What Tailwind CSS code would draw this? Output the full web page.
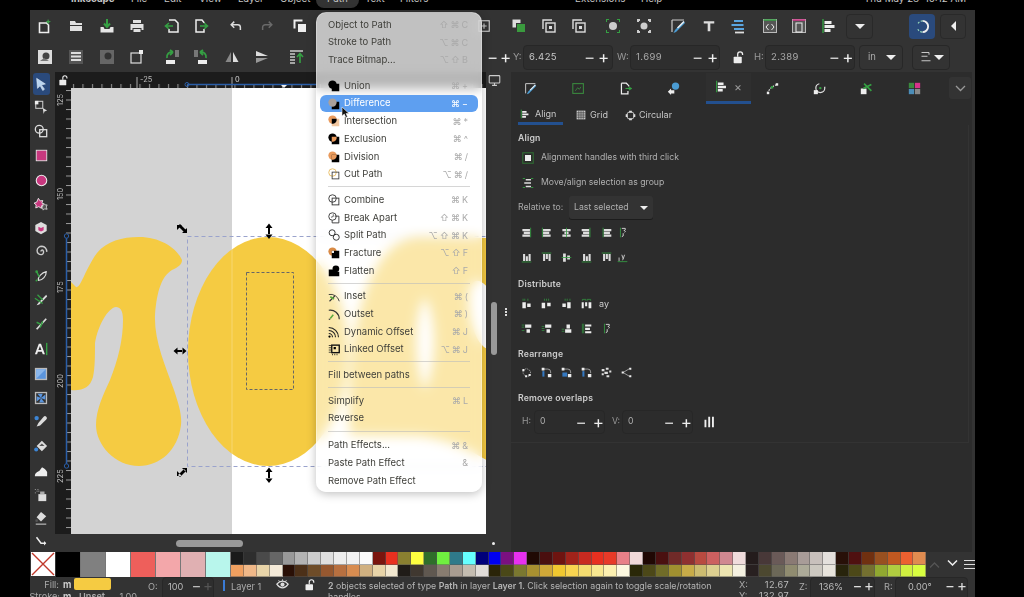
<!DOCTYPE html>
<html lang="en">
<head>
<meta charset="UTF-8">
<title>Inkscape</title>
<script src="https://cdn.jsdelivr.net/npm/@tailwindcss/browser@4"></script>
</head>
<body class="bg-black">
<!-- icon sheet -->
<svg class="hidden">
  <symbol id="newdoc" viewBox="0 0 16 16"><path d="M2.500 5h7l2 2v7.500h-9z" fill="none" stroke="#eee" stroke-width="1.600"/><path d="M11 1l1 2 2 .5-2 1-1 2-.6-2-1.900-1 1.900-.5z" fill="#3fa34d"/></symbol>
  <symbol id="open" viewBox="0 0 16 16"><path d="M2 3h5l1 2h6v2H2zM2 8h12v5H2z" fill="#e0e0e0"/></symbol>
  <symbol id="save" viewBox="0 0 16 16"><path d="M1.500 9h3l1 2h5l1-2h3v5.500h-13z" fill="#e6e6e6"/><path d="M8 1v7M5 5.500L8 9l3-3.500" fill="none" stroke="#35a043" stroke-width="2"/></symbol>
  <symbol id="print" viewBox="0 0 16 16"><path d="M4 2h8v3H4zM1.500 6h13v6h-2v-2h-9v2h-2zM4.500 11h7v3h-7z" fill="#e0e0e0"/></symbol>
  <symbol id="import" viewBox="0 0 16 16"><path d="M5 2h6l3 3v9H5v-3" fill="none" stroke="#eee" stroke-width="1.500"/><path d="M9 8H2M5 5L1.500 8 5 11" fill="none" stroke="#35a043" stroke-width="1.600"/></symbol>
  <symbol id="export" viewBox="0 0 16 16"><path d="M11 5V4.500L9 2H3v12h8v-3" fill="none" stroke="#eee" stroke-width="1.500"/><path d="M7 8h7M11 5l3.500 3-3.500 3" fill="none" stroke="#35a043" stroke-width="1.600"/></symbol>
  <symbol id="undo" viewBox="0 0 16 16"><path d="M6 3L2.500 6.500 6 10M3 6.500h7a3 3 0 0 1 3 3v3" fill="none" stroke="#ddd" stroke-width="1.700"/></symbol>
  <symbol id="redo" viewBox="0 0 16 16"><path d="M10 3l3.500 3.500L10 10M13 6.500H6a3 3 0 0 0-3 3v3" fill="none" stroke="#6a6a6a" stroke-width="1.700"/></symbol>
  <symbol id="dup" viewBox="0 0 16 16"><path d="M1.500 1.500h9v2h-7v7h-2z" fill="#eee"/><rect x="5.500" y="5.500" width="9" height="9" fill="#eee" stroke="#333"/></symbol>
  <symbol id="dupg" viewBox="0 0 16 16"><path d="M1.500 1.500h8v8h-8z" fill="#ddd"/><rect x="5.500" y="5.500" width="9" height="9" fill="#3a9a3e" stroke="#333"/></symbol>
  <symbol id="clone" viewBox="0 0 16 16"><path d="M2 11V2h9" fill="none" stroke="#ddd" stroke-width="1.400"/><rect x="5" y="5" width="9" height="9" fill="none" stroke="#ddd" stroke-width="1.400"/><rect x="8" y="8" width="3" height="3" fill="#ddd"/></symbol>
  <symbol id="group" viewBox="0 0 16 16"><circle cx="8" cy="8" r="4" fill="#ccc"/><path d="M1 1h3v1H2v2H1zM15 1v3h-1V2h-2V1zM1 15v-3h1v2h2v1zM15 15h-3v-1h2v-2h1z" fill="#35a043"/></symbol>
  <symbol id="ungroup" viewBox="0 0 16 16"><circle cx="8" cy="8" r="3.500" fill="#ccc"/><path d="M1 1h3v2H3v1H1zM15 1v3h-2V3h-1V1zM1 15v-3h2v1h1v2zM15 15h-3v-2h1v-1h2z" fill="#ccc"/></symbol>
  <symbol id="pen" viewBox="0 0 16 16"><path d="M2 2h12M2 2v12" stroke="#ccc" stroke-width="1.200" fill="none"/><path d="M13.500 3L5 12l-1.500 3 2.500-1 9-9z" fill="#4b9cd3"/><path d="M13.500 3L7 9.500l1 1 6.500-6.500z" fill="#eee"/></symbol>
  <symbol id="textT" viewBox="0 0 16 16"><path d="M2 2.500h12v2.500H9.500v9h-3V5H2z" fill="#ddd"/></symbol>
  <symbol id="lines" viewBox="0 0 16 16"><path d="M4 3h9M1.500 7h12M4 11h10" stroke="#5aa5e0" stroke-width="1.800"/><path d="M5 14.500h9" stroke="#ddd" stroke-width="1.800"/></symbol>
  <symbol id="xml" viewBox="0 0 16 16"><rect x="1.500" y="1.500" width="13" height="13" fill="#555" stroke="#bbb"/><path d="M1.500 2h13" stroke="#35a043" stroke-width="1.500"/><path d="M6.500 6L4 9l2.500 3M9.500 6L12 9l-2.500 3" fill="none" stroke="#eee"/></symbol>
  <symbol id="obj" viewBox="0 0 16 16"><rect x="1.500" y="1.500" width="13" height="13" fill="#555" stroke="#bbb"/><path d="M1.500 2h13" stroke="#d6338a" stroke-width="1.500"/><rect x="5" y="5" width="6" height="9" fill="none" stroke="#eee"/></symbol>
  <symbol id="alignL" viewBox="0 0 16 16"><path d="M2 1v14" stroke="#35a043" stroke-width="1.400"/><path d="M3.500 3h7v3h-7zM3.500 7h10v3h-10zM3.500 11h6v3h-6z" fill="#eee"/></symbol>
  <symbol id="plusbox" viewBox="0 0 16 16"><rect x="2" y="2" width="12" height="12" fill="none" stroke="#ccc" stroke-width="1.300"/><path d="M8 5v6M5 8h6" stroke="#ccc" stroke-width="1.300"/></symbol>
  <symbol id="selall" viewBox="0 0 16 16"><rect x="1" y="1" width="14" height="14" fill="#ddd"/><circle cx="9" cy="7" r="3.500" fill="#444"/><path d="M3 12l4-3 5 3z" fill="#777"/></symbol>
  <symbol id="layers" viewBox="0 0 16 16"><rect x="1" y="1" width="14" height="14" fill="#555"/><path d="M3 3h10v2H3zM3 6.500h10v2H3zM3 10h10v2H3z" fill="#ddd"/></symbol>
  <symbol id="selb" viewBox="0 0 16 16"><rect x="1" y="1" width="14" height="14" fill="#666"/><circle cx="9" cy="7" r="3.500" fill="#333"/></symbol>
  <symbol id="touch" viewBox="0 0 16 16"><rect x="2" y="4" width="10" height="10" fill="none" stroke="#ddd" stroke-width="1.200"/><rect x="10" y="1" width="4" height="4" fill="#eee"/></symbol>
  <symbol id="rotl" viewBox="0 0 16 16"><path d="M2 15v-4h9v4z" fill="#eee"/><path d="M3 9a5 5 0 0 1 6-6M9 3L6 1M9 3L6 6" fill="none" stroke="#35a043" stroke-width="1.800"/><rect x="11" y="1" width="4" height="7" fill="#777"/></symbol>
  <symbol id="rotr" viewBox="0 0 16 16"><path d="M5 15v-4h9v4z" fill="#eee"/><path d="M13 9a5 5 0 0 0-6-6M7 3l3-2M7 3l3 3" fill="none" stroke="#35a043" stroke-width="1.800"/><rect x="1" y="1" width="4" height="7" fill="#777"/></symbol>
  <symbol id="fliph" viewBox="0 0 16 16"><path d="M7 3L1.500 13H7z" fill="#888"/><path d="M9 3l5.500 10H9z" fill="#ddd"/></symbol>
  <symbol id="flipv" viewBox="0 0 16 16"><path d="M2 2l12 5H2z" fill="#ddd"/><path d="M2 9h12L2 14z" fill="#999"/></symbol>
  <symbol id="raise" viewBox="0 0 16 16"><path d="M1 2h13M1 5h5M1 8h5M1 11h5M1 14h5" stroke="#ccc" stroke-width="1.300"/><path d="M11 14V5M8 8l3-3.500L14 8" fill="none" stroke="#35a043" stroke-width="1.600"/></symbol>
  <symbol id="lock" viewBox="0 0 16 16"><rect x="2" y="7" width="10" height="8" rx="1" fill="#eee"/><path d="M7 7V4a3 3 0 0 1 6 0v1" fill="none" stroke="#eee" stroke-width="1.600"/></symbol>
  <symbol id="screen" viewBox="0 0 16 16"><rect x="1.500" y="2" width="13" height="9" rx="1" fill="none" stroke="#ccc" stroke-width="1.300"/><path d="M5 14h6M8 11v3" stroke="#ccc" stroke-width="1.300"/></symbol>

  <symbol id="arrow" viewBox="0 0 16 16"><path d="M3 1.500l10 6.500-4.500 1L12 14l-2 1.500-3-5.500-3 3z" fill="#b9d4f0" stroke="#e8f0f8" stroke-width=".6"/></symbol>
  <symbol id="node" viewBox="0 0 16 16"><rect x="2" y="1.500" width="8" height="8" fill="none" stroke="#ccc" stroke-width="1.200"/><rect x="1" y="1" width="4" height="4" fill="#eee"/><path d="M10 9l5 3-3 1-1 3z" fill="#ddd"/></symbol>
  <symbol id="shapes" viewBox="0 0 16 16"><circle cx="6" cy="6" r="4.500" fill="none" stroke="#ddd" stroke-width="1.500"/><rect x="6.500" y="6.500" width="8" height="8" fill="none" stroke="#ddd" stroke-width="1.500"/></symbol>
  <symbol id="rect" viewBox="0 0 16 16"><rect x="1.500" y="1.500" width="13" height="13" fill="#c8387f" stroke="#eee"/></symbol>
  <symbol id="circ" viewBox="0 0 16 16"><circle cx="8" cy="8" r="6.500" fill="#c8387f" stroke="#eee" stroke-width="1.300"/></symbol>
  <symbol id="stars" viewBox="0 0 16 16"><path d="M5 1.500l2 3 3-.5-1 3 2.500 2-3 1v3L5.500 11 2 12.500l.5-3.500L0 7l3-1z" fill="#c8387f" stroke="#eee"/><path d="M11 7l1.500 2 2.500 0-1 2.500 1 2.500-3-.5-1.500 1.500-1-3z" fill="#555" stroke="#eee" stroke-width=".8"/></symbol>
  <symbol id="cube" viewBox="0 0 16 16"><path d="M8 1l6.500 3.500v7L8 15l-6.500-3.500v-7z" fill="#ddd"/><path d="M8 8l3-1.500v4L8 12l-3-1.500v-4z" fill="#c8387f"/></symbol>
  <symbol id="spiral" viewBox="0 0 16 16"><path d="M8 8.500a1.500 1.500 0 0 1 2-1.500 3 3 0 0 1-1 5 4.500 4.500 0 0 1-5.500-4.500A5.500 5.500 0 0 1 9 2.500 6 6 0 0 1 14.500 9" fill="none" stroke="#ccc" stroke-width="1.600"/></symbol>
  <symbol id="pencil" viewBox="0 0 16 16"><path d="M5 13c-1-4 4-9 9-10 0 5-4 10-9 10z" fill="none" stroke="#ddd" stroke-width="1.300"/><path d="M3 3l3 6M2 14l2-2" stroke="#35a043" stroke-width="1.600"/><circle cx="3" cy="3" r="1.500" fill="#35a043"/></symbol>
  <symbol id="pen2" viewBox="0 0 16 16"><path d="M14 2L5 11l-2 3 3-1 9-9z" fill="#ddd"/><path d="M1 6l9 6M4 2l6 6" stroke="#35a043" stroke-width="1.500"/></symbol>
  <symbol id="callig" viewBox="0 0 16 16"><path d="M14 2L3 14" stroke="#ddd" stroke-width="2"/><path d="M3 6l4 2M7 12l3-7" stroke="#35a043" stroke-width="1.600"/></symbol>
  <symbol id="textA" viewBox="0 0 16 16"><path d="M1 14L5.500 2h2.500L12.500 14H10l-1-3H4.500l-1 3zM5 9h3.500L6.800 4.500z" fill="#eee"/><path d="M14.500 1v14" stroke="#35a043" stroke-width="1.600"/></symbol>
  <symbol id="grad" viewBox="0 0 16 16"><rect x="1" y="1" width="14" height="14" fill="#bbb"/><rect x="2.500" y="2.500" width="11" height="11" fill="#5b95dd"/><path d="M2.500 2.500h11L2.500 13.500z" fill="#8ab6ea"/></symbol>
  <symbol id="mesh" viewBox="0 0 16 16"><rect x="1" y="1" width="14" height="14" fill="#bbb"/><rect x="2.500" y="2.500" width="11" height="11" fill="#333"/><path d="M8 8L4 3h6zM8 8l5-4v6zM8 8l4 5H6zM8 8l-5 4V6z" fill="#5b95dd"/></symbol>
  <symbol id="dropper" viewBox="0 0 16 16"><path d="M14 2c-1-1-2-1-3 0L5 9l-2 4 4-1 7-7c1-1 1-2 0-3z" fill="#ddd"/><circle cx="3" cy="3.500" r="2.500" fill="#3d86d6"/></symbol>
  <symbol id="bucket" viewBox="0 0 16 16"><path d="M9 2l6 6-6 6-6-6z" fill="#ddd"/><circle cx="2.500" cy="12" r="2.300" fill="#3d86d6"/><path d="M9 5l3 3H6z" fill="#555"/></symbol>
  <symbol id="eraser" viewBox="0 0 16 16"><path d="M1 14c0-4 3-5 5-6l3-4c2 0 5 3 6 5v5z" fill="#eee"/></symbol>
  <symbol id="spray" viewBox="0 0 16 16"><rect x="5" y="7" width="9" height="8" fill="#ddd"/><rect x="7" y="4" width="5" height="3" fill="#aaa"/><path d="M1 1h1v1H1zM3 3h1v1H3zM1 5h1v1H1zM4 1h1v1H4zM5 3h1v1H5z" fill="#ccc"/></symbol>
  <symbol id="erase2" viewBox="0 0 16 16"><path d="M8 1l6 5-6 6-5-5z" fill="#ddd"/><path d="M2 15h12" stroke="#ccc" stroke-width="1.200"/><circle cx="3" cy="11" r="1.500" fill="#555"/></symbol>
  <symbol id="conn" viewBox="0 0 16 16"><path d="M2 3l6 8h6" fill="none" stroke="#eee" stroke-width="2"/><path d="M12 8l3 3-3 3z" fill="#eee"/></symbol>
  <symbol id="tab1" viewBox="0 0 16 16"><rect x="1" y="2" width="13" height="12" fill="none" stroke="#3a8a3e" stroke-width="1.300"/><path d="M4 11l3-4 2 2 2-3" fill="none" stroke="#3a8a3e"/></symbol>
  <symbol id="tab2" viewBox="0 0 16 16"><path d="M3 1.500h6l3 3v1M3 1.500v13h8V11" fill="none" stroke="#eee" stroke-width="1.500"/><path d="M8 8h6M12 6l3 2-3 2" fill="none" stroke="#35a043" stroke-width="1.400"/></symbol>
  <symbol id="tab3" viewBox="0 0 16 16"><circle cx="10.500" cy="5" r="4.500" fill="#4b9cd3"/><path d="M1 12l4-4v2h4v4H5v2z" fill="#eee"/></symbol>
  <symbol id="tab4" viewBox="0 0 16 16"><path d="M2 14C4 8 8 5 14 3" fill="none" stroke="#ddd" stroke-dasharray="2 1.500" stroke-width="1.500"/><rect x="1" y="12" width="3" height="3" fill="#eee"/><rect x="6" y="5" width="3" height="3" fill="#35a043"/><rect x="12" y="1.500" width="3" height="3" fill="#eee"/></symbol>
  <symbol id="tab5" viewBox="0 0 16 16"><circle cx="9" cy="7.500" r="5.500" fill="none" stroke="#ddd" stroke-width="1.500" stroke-dasharray="24 8"/><circle cx="9" cy="7.500" r="1.500" fill="#35a043"/><rect x="1" y="10" width="5" height="5" fill="#eee"/></symbol>
  <symbol id="tab6" viewBox="0 0 16 16"><rect x="1" y="8" width="7" height="7" fill="#eee"/><path d="M5 2l9 9M4 8l10-5" stroke="#35a043" stroke-width="2"/></symbol>
  <symbol id="tab7" viewBox="0 0 16 16"><rect x="1" y="1" width="6.500" height="6.500" fill="#3a8a3e"/><rect x="8.500" y="1" width="6.500" height="6.500" fill="#d6338a"/><rect x="1" y="8.500" width="6.500" height="6.500" fill="#4b8db8"/><rect x="8.500" y="8.500" width="6.500" height="6.500" fill="#888"/></symbol>
  <symbol id="grid" viewBox="0 0 16 16"><path d="M1 1h14v14H1z" fill="#ccc"/><path d="M4.500 1v14M8 1v14M11.500 1v14M1 4.500h14M1 8h14M1 11.500h14" stroke="#2b2b2b"/></symbol>
  <symbol id="circular" viewBox="0 0 16 16"><circle cx="8" cy="8" r="5.500" fill="none" stroke="#ccc" stroke-width="1.300"/><path d="M6 1h4v3H6zM6 12h4v3H6zM1 6h3v4H1zM12 6h3v4h-3z" fill="#ddd"/></symbol>

  <symbol id="handle" viewBox="0 0 16 16"><rect x="1" y="1" width="14" height="14" fill="none" stroke="#2f6a33" stroke-width="1.500"/><rect x="4" y="4" width="8" height="8" fill="#eee"/></symbol>
  <symbol id="movegrp" viewBox="0 0 16 16"><path d="M1 2h3M12 2h3M1 14h3M12 14h3" stroke="#35a043" stroke-width="1.200"/><path d="M5 2.500h7v2H5zM3 7h9v2H3zM5 11.500h7v2H5z" fill="#ddd"/></symbol>
  <symbol id="a1" viewBox="0 0 16 16"><path d="M2 3h11v3H2zM4 7h9v3H4zM2 11h11v3H2z" fill="#ddd"/><path d="M14 1v14" stroke="#35a043" stroke-width="1.200"/></symbol>
  <symbol id="a2" viewBox="0 0 16 16"><path d="M3 3h11v3H3zM3 7h9v3H3zM3 11h11v3H3z" fill="#ddd"/><path d="M2 1v14" stroke="#35a043" stroke-width="1.200"/></symbol>
  <symbol id="a3" viewBox="0 0 16 16"><path d="M2 3h12v3H2zM5 7h6v3H5zM2 11h12v3H2z" fill="#ddd"/><path d="M8 1v14" stroke="#35a043" stroke-width="1.200"/></symbol>
  <symbol id="a4" viewBox="0 0 16 16"><path d="M1 3h11v3H1zM3 7h9v3H3zM1 11h11v3H1z" fill="#ddd"/><path d="M13 1v14" stroke="#35a043" stroke-width="1.200"/></symbol>
  <symbol id="a5" viewBox="0 0 16 16"><path d="M4 3h11v3H4zM4 7h9v3H4zM4 11h11v3H4z" fill="#ddd"/><path d="M3 1v14" stroke="#35a043" stroke-width="1.200"/></symbol>
  <symbol id="atxt" viewBox="0 0 16 16"><path d="M5 1v14" stroke="#35a043" stroke-width="1.200"/><path d="M7 2h5c1 2-1 3-2 3 2 0 3 2 1 3M9 9v4l-2 1" fill="none" stroke="#ddd" stroke-width="1.300"/></symbol>
  <symbol id="b1" viewBox="0 0 16 16"><path d="M3 3h3v10H3zM7 6h3v7H7zM11 3h3v10h-3z" fill="#ddd"/><path d="M1 14.500h14" stroke="#35a043" stroke-width="1.200"/></symbol>
  <symbol id="b2" viewBox="0 0 16 16"><path d="M3 3h3v10H3zM7 3h3v7H7zM11 3h3v10h-3z" fill="#ddd"/><path d="M1 1.500h14" stroke="#35a043" stroke-width="1.200"/></symbol>
  <symbol id="b3" viewBox="0 0 16 16"><path d="M3 2h4v12H3zM9 5h4v6H9z" fill="#ddd"/><path d="M1 8h14" stroke="#35a043" stroke-width="1.200"/></symbol>
  <symbol id="btxt" viewBox="0 0 16 16"><path d="M1 14h14" stroke="#35a043" stroke-width="1.200"/><path d="M3 8v5M7 4l2 6 2-6M9 10l-1 2" fill="none" stroke="#ddd" stroke-width="1.200"/></symbol>
  <symbol id="d1" viewBox="0 0 16 16"><path d="M3 1v3M5.500 1v3M10 1v3" stroke="#35a043"/><path d="M2 6h5v9H2zM9 8h5v5H9z" fill="#eee"/></symbol>
  <symbol id="d2" viewBox="0 0 16 16"><path d="M5 1v3M8 1v3M11 1v3" stroke="#35a043"/><path d="M1 7h5v8H1zM9 7h5v5H9z" fill="#eee"/></symbol>
  <symbol id="d3" viewBox="0 0 16 16"><path d="M6 1v3M9 1v3M13 1v3" stroke="#35a043"/><path d="M2 8h5v5H2zM9 6h5v9H9z" fill="#eee"/></symbol>
  <symbol id="d4" viewBox="0 0 16 16"><path d="M2 2h5M9 2h5M2 2v2M7 2v2M9 2v2M14 2v2" stroke="#35a043"/><path d="M1 6h3v9H1zM6 6h3v6H6zM11 6h4v9h-4z" fill="#eee"/></symbol>
  <symbol id="e1" viewBox="0 0 16 16"><path d="M1 3h4M1 6h4M1 11h4" stroke="#35a043"/><path d="M6 2h9v5H6zM8 9h5v5H8z" fill="#eee"/></symbol>
  <symbol id="e2" viewBox="0 0 16 16"><path d="M1 5h4M1 8h4M1 11h4" stroke="#35a043"/><path d="M6 2h9v5H6zM8 9h5v5H8z" fill="#eee"/></symbol>
  <symbol id="e3" viewBox="0 0 16 16"><path d="M1 9h4M1 12h4" stroke="#35a043"/><path d="M8 2h5v6H8zM6 9h9v5H6z" fill="#eee"/></symbol>
  <symbol id="e4" viewBox="0 0 16 16"><path d="M2 1v14M4 1v14" stroke="#35a043"/><path d="M6 2h9v3H6zM6 7h7v3H6zM6 12h9v3H6z" fill="#eee"/></symbol>
  <symbol id="r1" viewBox="0 0 16 16"><path d="M3 5L8 2l6 4-1 7-6 1-4-5z" fill="none" stroke="#ccc" stroke-dasharray="2 1.500"/><path d="M2 3h3v3H2zM11 10h3v3h-3zM6 12h3v3H6z" fill="#eee"/></symbol>
  <symbol id="r2" viewBox="0 0 16 16"><path d="M4 3h6a4 4 0 0 1 4 4v2" fill="none" stroke="#ccc"/><path d="M1 1h4v4H1zM10 10h5v5h-5z" fill="#eee"/><path d="M2 6h3v8H2z" fill="#3478c0"/></symbol>
  <symbol id="r3" viewBox="0 0 16 16"><path d="M4 3h6a4 4 0 0 1 4 4v2" fill="none" stroke="#ccc"/><path d="M1 1h4v4H1zM10 10h5v5h-5z" fill="#eee"/><path d="M2 8h7v6H2z" fill="#3478c0"/></symbol>
  <symbol id="r5" viewBox="0 0 16 16"><path d="M1 3h4v3H1zM7 1h4v3H7zM12 5h3v3h-3zM5 7h5v3H5zM1 9h3v3H1zM8 12h4v3H8z" fill="#ddd"/></symbol>
  <symbol id="r6" viewBox="0 0 16 16"><path d="M3 8l10-6M3 8l10 6" stroke="#ccc"/><path d="M1 6.500h3v3H1zM12 1h3v3h-3zM12 12h3v3h-3z" fill="#eee"/></symbol>
  <symbol id="bars" viewBox="0 0 16 16"><path d="M2 5h2.500v10H2zM7 1h2.500v14H7zM12 1h2.500v14H12z" fill="#eee"/></symbol>

  <symbol id="m-union" viewBox="0 0 16 16"><circle cx="6" cy="6" r="5.500"/><rect x="5" y="5" width="10" height="10"/></symbol>
  <symbol id="m-diff" viewBox="0 0 16 16"><rect x="5" y="5" width="10" height="10"/><circle cx="6" cy="6" r="5.500" fill="#aaa09a"/></symbol>
  <symbol id="m-inter" viewBox="0 0 16 16"><circle cx="6" cy="6" r="5.500" fill="#e99a5c"/><rect x="5" y="5" width="10" height="10" fill="#f2c7a0"/><path d="M5 5h6.500A5.500 5.500 0 0 1 5 11.500z"/></symbol>
  <symbol id="m-excl" viewBox="0 0 16 16"><circle cx="6" cy="6" r="5.500"/><rect x="5" y="5" width="10" height="10"/><path d="M5 5h6.500A5.500 5.500 0 0 1 5 11.500z" fill="#e99a5c"/></symbol>
  <symbol id="m-div" viewBox="0 0 16 16"><circle cx="6" cy="6" r="5.500" fill="#e99a5c"/><rect x="5" y="5" width="10" height="10"/><path d="M5 5h6.500A5.500 5.500 0 0 1 5 11.500z" fill="#e99a5c"/></symbol>
  <symbol id="m-cut" viewBox="0 0 16 16"><circle cx="6" cy="6" r="5" fill="none" stroke="#e9c06c" stroke-width="1.300"/><rect x="5.500" y="5.500" width="9" height="9" fill="none" stroke="#333" stroke-width="1.100"/></symbol>
  <symbol id="m-comb" viewBox="0 0 16 16"><circle cx="6" cy="6" r="5" fill="none" stroke="#333" stroke-width="1.200"/><rect x="5.500" y="5.500" width="9" height="9" fill="none" stroke="#333" stroke-width="1.200"/></symbol>
  <symbol id="m-break" viewBox="0 0 16 16"><circle cx="6" cy="6" r="5" fill="none" stroke="#333" stroke-width="1.200"/><path d="M4 7l3-1v-3" fill="none" stroke="#333"/><path d="M9 5.500h5.500v9h-9V11" fill="none" stroke="#333" stroke-width="1.200"/></symbol>
  <symbol id="m-split" viewBox="0 0 16 16"><circle cx="5.500" cy="5" r="4" fill="none" stroke="#333" stroke-width="1.300"/><circle cx="11" cy="11" r="4" fill="none" stroke="#333" stroke-width="1.300"/></symbol>
  <symbol id="m-frac" viewBox="0 0 16 16"><circle cx="6" cy="6" r="5.500" fill="#d98a44"/><rect x="5" y="5" width="10" height="10"/><path d="M5 5h3v3H5z" fill="#eee"/></symbol>
  <symbol id="m-flat" viewBox="0 0 16 16"><circle cx="10.500" cy="5" r="4.500"/><path d="M1 6h8v3h6v6H1z"/></symbol>
  <symbol id="m-inset" viewBox="0 0 16 16"><path d="M1 6a12 12 0 0 1 14 9" fill="none" stroke="#333" stroke-width="1.200"/><path d="M2 15l7-7" stroke="#333" stroke-width="1.500"/><path d="M3 9l5 3" stroke="#5aa83c" stroke-width="2"/></symbol>
  <symbol id="m-outset" viewBox="0 0 16 16"><path d="M1 3a12 12 0 0 1 14 12" fill="none" stroke="#333" stroke-width="1.500"/><path d="M3 14l4-5" stroke="#5aa83c" stroke-width="2"/><path d="M1 15h2" stroke="#333" stroke-width="1.500"/></symbol>
  <symbol id="m-dyn" viewBox="0 0 16 16"><path d="M1 2a13 13 0 0 1 13 13M1 6a9 9 0 0 1 9 9M1 10a5 5 0 0 1 5 5" fill="none" stroke="#222" stroke-width="1.500"/><circle cx="2" cy="14" r="1.500"/></symbol>
  <symbol id="m-link" viewBox="0 0 16 16"><rect x="5" y="1.500" width="10" height="10" fill="none" stroke="#111" stroke-width="1.800"/><rect x="7.500" y="4" width="3" height="3"/><path d="M1 2h3M1 5h3M1 8h3M1 11h3M6 13v2M9 13v2M12 13v2" stroke="#111"/></symbol>
</svg>

<div class="relative w-[1024px] h-[597px] overflow-hidden bg-black font-['Inter','DejaVu_Sans',sans-serif]">
  <!-- mac menu bar, cut off at the top -->
  <div class="absolute left-[316px] top-0 w-[43px] h-[8px] rounded-b-[8px] bg-[#333]"></div>
  <div class="relative h-[10px] overflow-hidden text-[#c4c4c4] text-[9.800px] leading-[10px]">
    <div class="flex -mt-[7px] items-center h-[12px]">
      <span class="ml-[71px] w-[60px] font-bold">Inkscape</span>
      <span class="w-[33px]">File</span>
      <span class="w-[35px]">Edit</span>
      <span class="w-[39px]">View</span>
      <span class="w-[42px]">Layer</span>
      <span class="w-[47px]">Object</span>
      <span class="w-[38px]">Path</span>
      <span class="w-[35px]">Text</span>
      <span class="w-[175px]">Filters</span>
      <span class="w-[66px]">Extensions</span>
      <span class="w-[223px]">Help</span>
      <span>Thu May 28&nbsp; 10:12 AM</span>
    </div>
  </div>

  <div class="ml-[30px] w-[945px] h-[587px] bg-[#333] flex flex-col text-[#c8c8c8] blur-[0.35px]">
    <!-- toolbar 1 -->
    <div class="h-[32px] flex items-center shrink-0">
      <svg class="w-[16px] h-[16px] ml-[7px]"><use href="#newdoc"/></svg>
      <svg class="w-[16px] h-[16px] ml-[15px]"><use href="#open"/></svg>
      <svg class="w-[16px] h-[16px] ml-[15px]"><use href="#save"/></svg>
      <svg class="w-[16px] h-[16px] ml-[14px]"><use href="#print"/></svg>
      <svg class="w-[16px] h-[16px] ml-[19px]"><use href="#import"/></svg>
      <svg class="w-[16px] h-[16px] ml-[13px]"><use href="#export"/></svg>
      <svg class="w-[14px] h-[14px] ml-[20px]"><use href="#undo"/></svg>
      <svg class="w-[14px] h-[14px] ml-[17px]"><use href="#redo"/></svg>
      <svg class="w-[16px] h-[16px] ml-[18px]"><use href="#dup"/></svg>
      <svg class="w-[14px] h-[14px] ml-[169px]"><use href="#plusbox"/></svg>
      <svg class="w-[16px] h-[16px] ml-[20px]"><use href="#dupg"/></svg>
      <svg class="w-[16px] h-[16px] ml-[14px]"><use href="#clone"/></svg>
      <svg class="w-[16px] h-[16px] ml-[14px]"><use href="#clone"/></svg>
      <svg class="w-[16px] h-[16px] ml-[18px]"><use href="#group"/></svg>
      <svg class="w-[16px] h-[16px] ml-[15px]"><use href="#ungroup"/></svg>
      <svg class="w-[16px] h-[16px] ml-[18px]"><use href="#pen"/></svg>
      <svg class="w-[14px] h-[14px] ml-[16px]"><use href="#textT"/></svg>
      <svg class="w-[16px] h-[16px] ml-[14px]"><use href="#lines"/></svg>
      <svg class="w-[16px] h-[16px] ml-[16px]"><use href="#xml"/></svg>
      <svg class="w-[16px] h-[16px] ml-[13px]"><use href="#obj"/></svg>
      <svg class="w-[16px] h-[16px] ml-[14px]"><use href="#alignL"/></svg>
      <div class="w-[27px] h-[25px] ml-[9px] rounded-[4px] border border-[#292929] flex items-center justify-center"><div class="w-0 h-0 border-x-[5px] border-x-transparent border-t-[5px] border-t-[#eee]"></div></div>
      <div class="w-[26px] h-[25px] ml-[36px] rounded-[4px] bg-[#2a4a7c] flex items-center justify-center">
        <svg class="w-[15px] h-[15px]" viewBox="0 0 16 16"><path d="M8 2a6 6 0 0 1 0 12" fill="none" stroke="#eee" stroke-width="2"/><path d="M8 2a6 6 0 0 0-5 3M3 11a6 6 0 0 0 5 3" fill="none" stroke="#9db" stroke-width="1.300" stroke-dasharray="2 1.500"/></svg>
      </div>
      <div class="w-[26px] h-[25px] ml-[5px] rounded-[4px] border border-[#292929] flex items-center justify-center"><div class="w-0 h-0 border-y-[5px] border-y-transparent border-r-[5px] border-r-[#eee]"></div></div>
    </div>
    <!-- toolbar 2 -->
    <div class="h-[30px] flex items-center shrink-0 text-[9.500px]">
      <svg class="w-[16px] h-[16px] ml-[7px]"><use href="#selall"/></svg>
      <svg class="w-[16px] h-[16px] ml-[15px]"><use href="#layers"/></svg>
      <svg class="w-[16px] h-[16px] ml-[15px]"><use href="#selb"/></svg>
      <svg class="w-[16px] h-[16px] ml-[14px]"><use href="#touch"/></svg>
      <svg class="w-[16px] h-[16px] ml-[19px]"><use href="#rotl"/></svg>
      <svg class="w-[16px] h-[16px] ml-[13px]"><use href="#rotr"/></svg>
      <svg class="w-[16px] h-[16px] ml-[15px]"><use href="#fliph"/></svg>
      <svg class="w-[16px] h-[16px] ml-[14px]"><use href="#flipv"/></svg>
      <svg class="w-[16px] h-[16px] ml-[19px]"><use href="#raise"/></svg>
      <span class="ml-[182px] w-[13px] text-[17px] text-[#ddd] leading-none">−</span>
      <span class="w-[14px] text-[17px] text-[#eee] leading-none">+</span>
      <span class="w-[7px] -ml-[1px] text-[#999]">Y:</span>
      <div class="ml-[3px] w-[90px] h-[25px] rounded-[4px] bg-[#2e2e2e] border border-[#272727] flex items-center pl-[5px] tracking-[.4px]">
        <span class="w-[55px]">6.425</span><span class="w-[14px] text-[17px] leading-none text-[#ccc]">−</span><span class="text-[17px] leading-none text-[#eee]">+</span>
      </div>
      <span class="w-[13px] ml-[4px] text-[#999]">W:</span>
      <div class="w-[90px] h-[25px] rounded-[4px] bg-[#2e2e2e] border border-[#272727] flex items-center pl-[5px] tracking-[.4px] text-[#aaa]">
        <span class="w-[56px]">1.699</span><span class="w-[15px] text-[17px] leading-none text-[#ccc]">−</span><span class="text-[17px] leading-none text-[#eee]">+</span>
      </div>
      <svg class="w-[13px] h-[13px] ml-[12px]"><use href="#lock"/></svg>
      <span class="w-[10px] ml-[9px] text-[#999]">H:</span>
      <div class="ml-[1px] w-[90px] h-[25px] rounded-[4px] bg-[#2e2e2e] border border-[#272727] flex items-center pl-[5px] tracking-[.4px] text-[#aaa]">
        <span class="w-[59px]">2.389</span><span class="w-[14px] text-[17px] leading-none text-[#ccc]">−</span><span class="text-[17px] leading-none text-[#eee]">+</span>
      </div>
      <div class="ml-[4px] w-[44px] h-[25px] rounded-[4px] bg-[#333] border border-[#272727] flex items-center pl-[8px] text-[#aaa]">
        <span class="w-[18px]">in</span><div class="w-0 h-0 border-x-[5px] border-x-transparent border-t-[5px] border-t-[#eee]"></div>
      </div>
      <div class="ml-[9px] w-[38px] h-[25px] rounded-[4px] bg-[#333] border border-[#272727] flex items-center pl-[7px]">
        <svg class="w-[12px] h-[12px]" viewBox="0 0 16 16"><path d="M2 2h10v3M2 7h8M2 13h12" stroke="#ccc" stroke-width="1.300" fill="none"/></svg>
        <div class="ml-[2px] w-0 h-0 border-x-[5px] border-x-transparent border-t-[5px] border-t-[#eee]"></div>
      </div>
    </div>
    <!-- main area -->
    <div class="h-[480px] flex shrink-0">
      <!-- tool column -->
      <div class="w-[25px] shrink-0 flex flex-col items-center pt-[1px] relative">
        <div class="w-[17px] h-[22px] rounded-[3px] bg-[#2a4a7c] flex items-center justify-center shrink-0 -ml-[3px]"><svg class="w-[14px] h-[14px]"><use href="#arrow"/></svg></div>
        <div class="flex flex-col items-center -ml-[3px]">
          <div class="h-[24px] flex items-center"><svg class="w-[14px] h-[14px]"><use href="#node"/></svg></div>
          <div class="h-[24px] flex items-center"><svg class="w-[14px] h-[14px]"><use href="#shapes"/></svg></div>
          <div class="h-[25px] flex items-center"><svg class="w-[13px] h-[13px]"><use href="#rect"/></svg></div>
          <div class="h-[24px] flex items-center"><svg class="w-[13px] h-[13px]"><use href="#circ"/></svg></div>
          <div class="h-[24px] flex items-center"><svg class="w-[14px] h-[14px]"><use href="#stars"/></svg></div>
          <div class="h-[23px] flex items-center"><svg class="w-[14px] h-[14px]"><use href="#cube"/></svg></div>
          <div class="h-[24px] flex items-center"><svg class="w-[14px] h-[14px]"><use href="#spiral"/></svg></div>
          <div class="h-[25px] flex items-center"><svg class="w-[14px] h-[14px]"><use href="#pencil"/></svg></div>
          <div class="h-[24px] flex items-center"><svg class="w-[14px] h-[14px]"><use href="#pen2"/></svg></div>
          <div class="h-[24px] flex items-center"><svg class="w-[14px] h-[14px]"><use href="#callig"/></svg></div>
          <div class="h-[25px] flex items-center"><svg class="w-[14px] h-[14px]"><use href="#textA"/></svg></div>
          <div class="h-[25px] flex items-center"><svg class="w-[14px] h-[14px]"><use href="#grad"/></svg></div>
          <div class="h-[24px] flex items-center"><svg class="w-[14px] h-[14px]"><use href="#mesh"/></svg></div>
          <div class="h-[24px] flex items-center"><svg class="w-[14px] h-[14px]"><use href="#dropper"/></svg></div>
          <div class="h-[24px] flex items-center"><svg class="w-[14px] h-[14px]"><use href="#bucket"/></svg></div>
          <div class="h-[25px] flex items-center"><svg class="w-[14px] h-[14px]"><use href="#eraser"/></svg></div>
          <div class="h-[23px] flex items-center"><svg class="w-[14px] h-[14px]"><use href="#spray"/></svg></div>
          <div class="h-[24px] flex items-center"><svg class="w-[14px] h-[14px]"><use href="#erase2"/></svg></div>
          <div class="h-[22px] flex items-center"><svg class="w-[12px] h-[12px]"><use href="#conn"/></svg></div>
        </div>
      </div>

      <!-- canvas column -->
      <div class="w-[456px] shrink-0 flex flex-col">
        <div class="h-[16px] flex bg-[#1c1c1c] shrink-0">
          <div class="w-[16px] h-[16px] flex items-center justify-center"><svg class="w-[11px] h-[11px]"><use href="#lock"/></svg></div>
          <svg class="w-[415px] h-[16px]" viewBox="71 72 415 16">
            <defs><pattern id="tx" x="71" y="84" width="9.500" height="4" patternUnits="userSpaceOnUse"><rect x="2" width="1" height="4" fill="#999"/></pattern></defs>
            <rect x="71" y="84" width="415" height="4" fill="url(#tx)"/>
            <path d="M137 77v11M232 77v11" stroke="#aaa"/>
            <text x="140" y="82" font-size="7.500" fill="#bbb" font-family="Inter">-25</text>
            <text x="235" y="82" font-size="7.500" fill="#ddd" font-family="Inter">0</text>
            <path d="M187 84.500h130" stroke="#2a5ea8" stroke-width="1.500"/><circle cx="187" cy="84.500" r="2" fill="none" stroke="#2a5ea8"/>
            <path d="M281 85h6l-3 3z" fill="#eee"/>
          </svg>
          <div class="w-[25px] bg-[#333] flex justify-center items-center"><svg class="w-[13px] h-[13px] -ml-[9px]"><use href="#screen"/></svg></div>
        </div>
        <div class="h-[446px] flex shrink-0">
          <svg class="w-[16px] h-[446px] shrink-0 bg-[#1c1c1c]" viewBox="55 88 16 446">
            <defs><pattern id="ty" x="66" y="90" width="5" height="9.500" patternUnits="userSpaceOnUse"><rect width="5" height="1" fill="#999"/></pattern></defs>
            <rect x="66" y="88" width="5" height="446" fill="url(#ty)"/>
            <text transform="translate(63 106) rotate(-90)" font-size="7.500" fill="#bbb" font-family="Inter">125</text>
            <text transform="translate(63 200) rotate(-90)" font-size="7.500" fill="#bbb" font-family="Inter">150</text>
            <text transform="translate(63 293) rotate(-90)" font-size="7.500" fill="#bbb" font-family="Inter">175</text>
            <text transform="translate(63 388) rotate(-90)" font-size="7.500" fill="#bbb" font-family="Inter">200</text>
            <text transform="translate(63 483) rotate(-90)" font-size="7.500" fill="#bbb" font-family="Inter">225</text>
            <path d="M66.500 236v230" stroke="#2a5ea8" stroke-width="1.500"/><circle cx="66.500" cy="236" r="2.200" fill="#1c1c1c" stroke="#2a5ea8"/><circle cx="66.500" cy="466" r="2.200" fill="#1c1c1c" stroke="#2a5ea8"/>
          </svg>
          <!-- drawing -->
          <svg class="w-[415px] h-[446px] shrink-0 bg-white" viewBox="71 88 415 446">
            <rect x="71" y="88" width="161" height="446" fill="#d3d3d3"/>
            <path fill="#f5cb42" d="M71 282 L75 286 Q77 289 80 284 C85 275 90 262 97 253 C107 241 122 237 139 237 C160 237 177 248 182 260 C182 265 178 267 172 270 C162 276 157 290 155 315 C154 340 165 365 174 390 C179 405 182 415 181 425 C178 450 160 466 139 466 C115 466 96 445 96 425 C96 410 103 395 110 380 C118 360 123 340 123 320 C123 310 120 307 116 307 C108 308 98 325 95 343 C95 355 95 368 93 377 C90 388 82 391 71 390 Z"/>
            <ellipse cx="268" cy="351.500" rx="80" ry="114.500" fill="#f5cb42"/>
            <path d="M232 240V463" stroke="#fff" stroke-opacity=".25"/>
            <path fill="#f5cb42" fill-rule="evenodd" d="M350 435 C345 340 365 237 420 237 L490 238 L490 290 C480 278 470 275 469 298 C469 330 480 348 490 350 L490 462 C470 450 450 440 420 436 Z M425 297 C415 310 412 360 425 390 C437 360 437 320 425 297 Z"/>
            <rect x="187.500" y="236.500" width="400" height="230" fill="none" stroke="#9aa3cc" stroke-dasharray="4 3"/>
            <rect x="246.500" y="272.500" width="47" height="117" fill="none" stroke="#666" stroke-dasharray="3 2"/>
            <g fill="#000">
              <path d="M268 228h2v7h-2zM269 223.500l3.500 4.500h-7zM269 239l3.500-4.500h-7z"/>
              <path d="M268 472h2v7h-2zM269 467.500l3.500 4.500h-7zM269 483l3.500-4.500h-7z"/>
              <path d="M177 350h6v2h-6zM173.500 351l4-3.500v7zM186.500 351l-4-3.500v7z"/>
              <path d="M178 226l2-2 6 6-2 2zM177 225h5l-5 5zM187 233h-5l5-5z"/>
              <path d="M178 475l2 2 6-6-2-2zM177 476v-5l5 5zM187 468v5l-5-5z"/>
            </g>
          </svg>
          <div class="w-[25px] shrink-0 flex items-start">
            <div class="ml-[5px] mt-[214px] w-[6px] h-[53px] rounded-full bg-[#999]"></div>
            <div class="ml-[8px] mt-[220px] flex flex-col gap-[1px]"><div class="w-[2px] h-[2px] bg-[#ddd]"></div><div class="w-[2px] h-[2px] bg-[#ddd]"></div><div class="w-[2px] h-[2px] bg-[#ddd]"></div></div>
          </div>
        </div>
        <div class="flex-1 relative flex items-center">
          <div class="ml-[121px] w-[67px] h-[7px] rounded-full bg-[#999]"></div>
          <div class="ml-[249px] w-[3px] h-[3px] rounded-full bg-[#eee]"></div>
        </div>
      </div>

      <!-- dock -->
      <div class="w-[461px] shrink-0 bg-[#2c2c2c] flex flex-col text-[8.700px] h-[480px]">
        <div class="h-[32px] flex items-center shrink-0 relative">
          <svg class="w-[13px] h-[13px] ml-[13px]"><use href="#pen"/></svg>
          <svg class="w-[13px] h-[13px] ml-[35px]"><use href="#tab1"/></svg>
          <svg class="w-[13px] h-[13px] ml-[34px]"><use href="#tab2"/></svg>
          <svg class="w-[13px] h-[13px] ml-[35px]"><use href="#tab3"/></svg>
          <div class="ml-[26px] w-[45px] h-[31px] flex items-center pl-[9px] border-b-[3px] border-[#23508f] bg-[#2f2f2f]">
            <svg class="w-[13px] h-[13px]"><use href="#alignL"/></svg><span class="ml-[6px] text-[12px] text-[#999]">×</span>
          </div>
          <svg class="w-[13px] h-[13px] ml-[15px]"><use href="#tab4"/></svg>
          <svg class="w-[13px] h-[13px] ml-[34px]"><use href="#tab5"/></svg>
          <svg class="w-[13px] h-[13px] ml-[34px]"><use href="#tab6"/></svg>
          <svg class="w-[13px] h-[13px] ml-[35px]"><use href="#tab7"/></svg>
          <div class="ml-[28px] w-[22px] h-[22px] rounded-[3px] bg-[#333] flex items-center justify-center"><svg class="w-[11px] h-[7px]" viewBox="0 0 11 7"><path d="M1 1l4.500 4.500L10 1" fill="none" stroke="#999" stroke-width="1.300"/></svg></div>
        </div>
        <div class="h-[21px] flex items-center pl-[7px] text-[9px] shrink-0">
          <div class="w-[45px] h-[21px] border-b-[3px] border-[#23508f] flex items-center gap-[5px] pl-[2px] pt-[2px]"><svg class="w-[10px] h-[10px]"><use href="#alignL"/></svg><span>Align</span></div>
          <div class="ml-[13px] flex items-center gap-[4px] pt-[1px]"><svg class="w-[10px] h-[10px]"><use href="#grid"/></svg><span>Grid</span></div>
          <div class="ml-[17px] flex items-center gap-[3px] pt-[1px]"><svg class="w-[11px] h-[11px]"><use href="#circular"/></svg><span>Circular</span></div>
        </div>
        <div class="pl-[7px] h-[318px] shrink-0 border-b border-[#333] border-r mr-[3px]">
          <div class="h-[25px] flex items-center font-semibold text-[#ccc] tracking-[.2px] pt-[2px]">Align</div>
          <div class="h-[25px] flex items-center -mt-[5px]"><svg class="w-[12px] h-[12px] ml-[4px]"><use href="#handle"/></svg><span class="ml-[7px] text-[#b0b0b0]">Alignment handles with third click</span></div>
          <div class="h-[25px] flex items-center"><svg class="w-[12px] h-[12px] ml-[4px]"><use href="#movegrp"/></svg><span class="ml-[7px] text-[#b0b0b0]">Move/align selection as group</span></div>
          <div class="h-[25px] flex items-center"><span class="text-[#aaa] w-[51px]">Relative to:</span>
            <div class="w-[84px] h-[23px] rounded-[3px] bg-[#333] shadow-[0_1px_0_#1c1c1c] flex items-center pl-[5px] text-[#b0b0b0]"><span class="w-[66px]">Last selected</span><div class="w-0 h-0 border-x-[4px] border-x-transparent border-t-[4px] border-t-[#eee]"></div></div>
          </div>
          <div class="h-[25px] flex items-center gap-[9px] pl-[3px]">
            <svg class="w-[11px] h-[11px]"><use href="#a1"/></svg><svg class="w-[11px] h-[11px]"><use href="#a2"/></svg><svg class="w-[11px] h-[11px]"><use href="#a3"/></svg><svg class="w-[11px] h-[11px]"><use href="#a4"/></svg><svg class="w-[11px] h-[11px]"><use href="#a5"/></svg><svg class="w-[11px] h-[11px] -ml-[4px]"><use href="#atxt"/></svg>
          </div>
          <div class="h-[25px] flex items-center gap-[9px] pl-[3px]">
            <svg class="w-[11px] h-[11px]"><use href="#b1"/></svg><svg class="w-[11px] h-[11px]"><use href="#b2"/></svg><svg class="w-[11px] h-[11px]"><use href="#b3"/></svg><svg class="w-[11px] h-[11px]"><use href="#b1"/></svg><svg class="w-[11px] h-[11px]"><use href="#b2"/></svg><svg class="w-[11px] h-[11px] -ml-[4px]"><use href="#btxt"/></svg>
          </div>
          <div class="h-[26px] flex items-center font-semibold text-[#ccc] tracking-[.2px] pt-[2px] mt-[1px]">Distribute</div>
          <div class="h-[25px] flex items-center gap-[9px] pl-[3px] -mt-[6px]">
            <svg class="w-[11px] h-[11px]"><use href="#d1"/></svg><svg class="w-[11px] h-[11px]"><use href="#d2"/></svg><svg class="w-[11px] h-[11px]"><use href="#d3"/></svg><svg class="w-[11px] h-[11px]"><use href="#d4"/></svg><span class="text-[9px] -ml-[2px] text-[#ccc]">ay</span>
          </div>
          <div class="h-[25px] flex items-center gap-[9px] pl-[3px]">
            <svg class="w-[11px] h-[11px]"><use href="#e1"/></svg><svg class="w-[11px] h-[11px]"><use href="#e2"/></svg><svg class="w-[11px] h-[11px]"><use href="#e3"/></svg><svg class="w-[11px] h-[11px]"><use href="#e4"/></svg><svg class="w-[11px] h-[11px]"><use href="#atxt"/></svg>
          </div>
          <div class="h-[25px] flex items-center font-semibold text-[#ccc] tracking-[.2px] pt-[2px]">Rearrange</div>
          <div class="h-[19px] flex items-center gap-[9px] pl-[3px] -mt-[3px]">
            <svg class="w-[11px] h-[11px]"><use href="#r1"/></svg><svg class="w-[11px] h-[11px]"><use href="#r2"/></svg><svg class="w-[11px] h-[11px]"><use href="#r3"/></svg><svg class="w-[11px] h-[11px]"><use href="#r2"/></svg><svg class="w-[11px] h-[11px]"><use href="#r5"/></svg><svg class="w-[11px] h-[11px]"><use href="#r6"/></svg>
          </div>
          <div class="h-[32px] flex items-center font-semibold text-[#ccc] tracking-[.2px] pt-[2px]">Remove overlaps</div>
          <div class="h-[24px] flex items-center -mt-[4px]">
            <span class="w-[16px] pl-[4px] text-[#999]">H:</span>
            <div class="w-[71px] h-[24px] rounded-[4px] border border-[#272727] flex items-center pl-[5px] text-[#b0b0b0]"><span class="w-[37px]">0</span><span class="w-[18px] text-[17px] leading-none text-[#ccc]">−</span><span class="text-[17px] leading-none text-[#eee]">+</span></div>
            <span class="w-[17px] pl-[7px] text-[#999]">V:</span>
            <div class="w-[71px] h-[24px] rounded-[4px] border border-[#272727] flex items-center pl-[5px] text-[#b0b0b0]"><span class="w-[37px]">0</span><span class="w-[18px] text-[17px] leading-none text-[#ccc]">−</span><span class="text-[17px] leading-none text-[#eee]">+</span></div>
            <svg class="w-[12px] h-[12px] ml-[10px]"><use href="#bars"/></svg>
          </div>
        </div>
      </div>
    </div>

    <!-- palette -->
    <div class="h-[25px] flex shrink-0 pl-[1px]">
      <svg class="w-[24px] h-[24px] bg-white shrink-0" viewBox="0 0 24 24"><path d="M1 1l22 22M23 1L1 23" stroke="#c0392b" stroke-width="1.400"/></svg>
      <div class="w-[25px] ml-[1px] bg-black border-r border-[#777]"></div>
      <div class="w-[25px] bg-[#808080] border-r border-[#777]"></div>
      <div class="w-[25px] bg-white border-r border-[#777]"></div>
      <div class="w-[25px] bg-[#ee5f5b] border-r border-[#777]"></div>
      <div class="w-[25px] bg-[#f3a7aa] border-r border-[#777]"></div>
      <div class="w-[25px] bg-[#e0b0b2] border-r border-[#777]"></div>
      <div class="w-[25px] bg-[#b8f6ec] border-r border-[#777]"></div>
      <div class="w-[695px] flex flex-col">
        <div id="row1" class="flex h-[12.500px]"></div>
        <div id="row2" class="flex h-[12.500px]"></div>
      </div>
      <div class="flex items-center ml-[3px] gap-[7px] relative">
        <svg class="w-[11px] h-[6px]" viewBox="0 0 11 6"><path d="M1 5.500l4.500-4.500L10 5.500" fill="none" stroke="#555" stroke-width="1.300"/></svg>
        <svg class="w-[11px] h-[6px] -mt-[4px]" viewBox="0 0 11 6"><path d="M1 .5l4.500 4.500L10 .5" fill="none" stroke="#eee" stroke-width="1.500"/></svg>
        <div class="flex flex-col gap-[2.500px] -ml-[1px]"><div class="w-[11px] h-[1.500px] bg-[#ddd]"></div><div class="w-[11px] h-[1.500px] bg-[#ddd]"></div><div class="w-[11px] h-[1.500px] bg-[#ddd]"></div></div>
      </div>
    </div>

    <!-- status bar -->
    <div class="h-[20px] flex items-start shrink-0 text-[9.200px] overflow-hidden relative">
      <div class="w-[41px] leading-[12px] text-[#aaa] pt-[2px] shrink-0 whitespace-nowrap">
        <div class="flex justify-end"><span>Fill:</span><span class="ml-[4px] w-[8px] font-bold text-[#ccc]">m</span></div>
        <div class="flex justify-end"><span>Stroke:</span><span class="ml-[3px] w-[8px] font-bold text-[#ccc]">m</span></div>
      </div>
      <div class="ml-[3px] w-[37px] shrink-0">
        <div class="w-[37px] h-[12px] mt-[1px] rounded-[2px] bg-[#f5cb42]"></div>
        <div class="whitespace-nowrap ml-[5px] leading-[13px] text-[#aaa] font-semibold">Unset <span class="font-normal ml-[12px]">1.00</span></div>
      </div>
      <span class="ml-[37px] w-[14px] text-[#aaa] mt-[3px] shrink-0">O:</span>
      <div class="w-[52px] h-[24px] shrink-0 rounded-[4px] border border-[#272727] bg-[#2e2e2e] flex items-start pt-[2px] pl-[5px] text-[#bbb]"><span class="w-[24px]">100</span><span class="w-[12px] text-[15px] leading-[12px] text-[#bbb]">−</span><span class="text-[15px] leading-[12px] text-[#555]">+</span></div>
      <div class="ml-[9px] mt-[3px] w-[2px] h-[11px] bg-[#3a7bd5] shrink-0"></div>
      <span class="ml-[6px] w-[44px] mt-[3px] text-[#aaa] shrink-0">Layer 1</span>
      <svg class="w-[13px] h-[12px] mt-[2px] ml-[1px] shrink-0" viewBox="0 0 16 14"><path d="M1 6c4-5 10-5 14 0-4 6-10 6-14 0z" fill="none" stroke="#ddd" stroke-width="1.500"/><circle cx="8" cy="6.500" r="2.500" fill="#ddd"/><path d="M3 1l2 2M13 1l-2 2M8 0v2" stroke="#ddd"/></svg>
      <svg class="w-[12px] h-[12px] mt-[2px] ml-[15px] shrink-0"><use href="#lock"/></svg>
      <div class="ml-[12px] w-[390px] pt-[3px] leading-[11px] text-[8.800px] text-[#b5b5b5] shrink-0"><b class="font-semibold">2</b> objects selected of type <b class="font-semibold">Path</b> in layer <b class="font-semibold">Layer 1</b>. Click selection again to toggle scale/rotation handles</div>
      <div class="ml-[21px] w-[14px] text-[#aaa] leading-[11px] pt-[2px] shrink-0"><div>X:</div><div>Y:</div></div>
      <div class="w-[36px] text-right text-[#bbb] leading-[11px] pt-[2px] shrink-0 tracking-[.3px]"><div>12.67</div><div>132.97</div></div>
      <span class="ml-[10px] w-[11px] mt-[3px] text-[#aaa] shrink-0">Z:</span>
      <div class="w-[65px] h-[24px] shrink-0 rounded-[4px] border border-[#272727] bg-[#2e2e2e] flex items-start pt-[2px] pl-[8px] text-[#bbb]"><span class="w-[35px]">136%</span><span class="w-[12px] text-[15px] leading-[12px] text-[#ddd]">−</span><span class="text-[15px] leading-[12px] text-[#ddd]">+</span></div>
      <span class="ml-[9px] w-[11px] mt-[3px] text-[#aaa] shrink-0">R:</span>
      <div class="w-[73px] h-[24px] shrink-0 rounded-[4px] border border-[#272727] bg-[#2e2e2e] flex items-start pt-[2px] pl-[12px] text-[#bbb]"><span class="w-[37px]">0.00°</span><span class="w-[12px] text-[15px] leading-[12px] text-[#ddd]">−</span><span class="text-[15px] leading-[12px] text-[#ddd]">+</span></div>
    </div>
  </div>

  <!-- Path menu -->
  <div class="absolute left-[316px] top-[12px] w-[166px] h-[480px] z-10 rounded-[10px] bg-linear-to-b from-white/70 from-[12%] to-white/55 to-[20%] backdrop-blur-[6px] border border-white/30 shadow-[0_2px_10px_rgba(0,0,0,0.25)] pt-[3px] px-[3px] text-[9.500px] text-[#3f3f3a]">
    <div class="blur-[0.3px]">
    <div class="h-[17.700px] flex items-center px-[8px] justify-between"><span>Object to Path</span><span class="text-[#aaa] text-[9px] tracking-[2px]">⇧⌘C</span></div>
    <div class="h-[17.700px] flex items-center px-[8px] justify-between"><span>Stroke to Path</span><span class="text-[#aaa] text-[9px] tracking-[2px]">⌥⌘C</span></div>
    <div class="h-[17.700px] flex items-center px-[8px] justify-between"><span>Trace Bitmap...</span><span class="text-[#aaa] text-[9px] tracking-[2px]">⌥⇧B</span></div>
    <div class="h-[4px] mx-[8px] border-b border-[#bbb]/60 mb-[4px]"></div>

    <div class="h-[17.700px] flex items-center px-[8px] justify-between"><span class="flex items-center gap-[4px]"><svg class="w-[12px] h-[12px]"><use href="#m-union"/></svg>Union</span><span class="text-[#aaa] text-[9px] tracking-[2px]">⌘+</span></div>
    <div class="h-[17.700px] flex items-center px-[8px] justify-between rounded-[6px] bg-[#5e9ff0] text-white"><span class="flex items-center gap-[4px]"><svg class="w-[12px] h-[12px]"><use href="#m-diff"/></svg>Difference</span><span class="text-[9px] tracking-[2px]">⌘−</span></div>
    <div class="h-[17.700px] flex items-center px-[8px] justify-between"><span class="flex items-center gap-[4px]"><svg class="w-[12px] h-[12px]"><use href="#m-inter"/></svg>Intersection</span><span class="text-[#aaa] text-[9px] tracking-[2px]">⌘*</span></div>
    <div class="h-[17.700px] flex items-center px-[8px] justify-between"><span class="flex items-center gap-[4px]"><svg class="w-[12px] h-[12px]"><use href="#m-excl"/></svg>Exclusion</span><span class="text-[#aaa] text-[9px] tracking-[2px]">⌘^</span></div>
    <div class="h-[17.700px] flex items-center px-[8px] justify-between"><span class="flex items-center gap-[4px]"><svg class="w-[12px] h-[12px]"><use href="#m-div"/></svg>Division</span><span class="text-[#aaa] text-[9px] tracking-[2px]">⌘/</span></div>
    <div class="h-[17.700px] flex items-center px-[8px] justify-between"><span class="flex items-center gap-[4px]"><svg class="w-[12px] h-[12px]"><use href="#m-cut"/></svg>Cut Path</span><span class="text-[#aaa] text-[9px] tracking-[2px]">⌥⌘/</span></div>
    <div class="h-[4px] mx-[8px] border-b border-[#bbb]/60 mb-[4px]"></div>

    <div class="h-[17.700px] flex items-center px-[8px] justify-between"><span class="flex items-center gap-[4px]"><svg class="w-[12px] h-[12px]"><use href="#m-comb"/></svg>Combine</span><span class="text-[#aaa] text-[9px] tracking-[2px]">⌘K</span></div>
    <div class="h-[17.700px] flex items-center px-[8px] justify-between"><span class="flex items-center gap-[4px]"><svg class="w-[12px] h-[12px]"><use href="#m-break"/></svg>Break Apart</span><span class="text-[#aaa] text-[9px] tracking-[2px]">⇧⌘K</span></div>
    <div class="h-[17.700px] flex items-center px-[8px] justify-between"><span class="flex items-center gap-[4px]"><svg class="w-[12px] h-[12px]"><use href="#m-split"/></svg>Split Path</span><span class="text-[#aaa] text-[9px] tracking-[2px]">⌥⇧⌘K</span></div>
    <div class="h-[17.700px] flex items-center px-[8px] justify-between"><span class="flex items-center gap-[4px]"><svg class="w-[12px] h-[12px]"><use href="#m-frac"/></svg>Fracture</span><span class="text-[#aaa] text-[9px] tracking-[2px]">⌥⇧F</span></div>
    <div class="h-[17.700px] flex items-center px-[8px] justify-between"><span class="flex items-center gap-[4px]"><svg class="w-[12px] h-[12px]"><use href="#m-flat"/></svg>Flatten</span><span class="text-[#aaa] text-[9px] tracking-[2px]">⇧F</span></div>
    <div class="h-[4px] mx-[8px] border-b border-[#bbb]/60 mb-[4px]"></div>

    <div class="h-[17.700px] flex items-center px-[8px] justify-between"><span class="flex items-center gap-[4px]"><svg class="w-[12px] h-[12px]"><use href="#m-inset"/></svg>Inset</span><span class="text-[#aaa] text-[9px] tracking-[2px]">⌘(</span></div>
    <div class="h-[17.700px] flex items-center px-[8px] justify-between"><span class="flex items-center gap-[4px]"><svg class="w-[12px] h-[12px]"><use href="#m-outset"/></svg>Outset</span><span class="text-[#aaa] text-[9px] tracking-[2px]">⌘)</span></div>
    <div class="h-[17.700px] flex items-center px-[8px] justify-between"><span class="flex items-center gap-[4px]"><svg class="w-[12px] h-[12px]"><use href="#m-dyn"/></svg>Dynamic Offset</span><span class="text-[#aaa] text-[9px] tracking-[2px]">⌘J</span></div>
    <div class="h-[17.700px] flex items-center px-[8px] justify-between"><span class="flex items-center gap-[4px]"><svg class="w-[12px] h-[12px]"><use href="#m-link"/></svg>Linked Offset</span><span class="text-[#aaa] text-[9px] tracking-[2px]">⌥⌘J</span></div>
    <div class="h-[4px] mx-[8px] border-b border-[#bbb]/60 mb-[4px]"></div>

    <div class="h-[17.700px] flex items-center px-[8px]">Fill between paths</div>
    <div class="h-[4px] mx-[8px] border-b border-[#bbb]/60 mb-[4px]"></div>

    <div class="h-[17.700px] flex items-center px-[8px] justify-between"><span>Simplify</span><span class="text-[#aaa] text-[9px] tracking-[2px]">⌘L</span></div>
    <div class="h-[17.700px] flex items-center px-[8px]">Reverse</div>
    <div class="h-[5px] mx-[8px] border-b border-[#bbb]/60 mb-[4px]"></div>

    <div class="h-[17.700px] flex items-center px-[8px] justify-between"><span>Path Effects...</span><span class="text-[#aaa] text-[9px] tracking-[2px]">⌘&amp;</span></div>
    <div class="h-[17.700px] flex items-center px-[8px] justify-between"><span>Paste Path Effect</span><span class="text-[#aaa] text-[9px] tracking-[2px]">&amp;</span></div>
    <div class="h-[17.700px] flex items-center px-[8px]">Remove Path Effect</div>
    </div>
    <!-- pointer -->
    <svg class="absolute left-[24px] top-[93px] w-[9px] h-[13px]" viewBox="0 0 9 13"><path d="M1 1v9l2.300-2 1.500 3.500 1.700-.7L5 7.500h3z" fill="#111" stroke="#eee" stroke-width=".6"/></svg>
  </div>
</div>

<script>
  // palette swatches, colours read off the screenshot
  const upperRow = ["#1a1a1a","#2e2e2e","#4a4a4a","#666666","#999999","#b3b3b3","#cccccc","#e0e0e0","#eeeeee","#f2f2f2","#fafafa","#7a150e","#e8301f","#8a8030","#ffff40","#2f6e2a","#70f040","#2f7a8a","#66ffff","#00007a","#0000f0","#7a1080","#e830f0","#200a04","#4a0f0f","#6e1410","#a0231a","#c82a20","#e83020","#e83a28","#e88088","#f0d8d8","#200804","#4a1010","#702a28","#8f3030","#b84a40","#cc6060","#d08890","#f0dcdc","#241c1c","#483838","#6a5a58","#8a7a74","#a89c98","#c8c0bc","#e4e0dc","#281008","#4f1010","#703010","#985020","#c05820","#ec6030","#e08c50"];
  const lowerRow = ["#f0a060","#f0b888","#e8d4a8","#f4ead8","#2a1006","#4c3018","#6e4c28","#965830","#b87040","#d88c50","#d0b080","#e8d4a8","#f2e8d0","#201c18","#403830","#605850","#887c70","#a89c90","#c4bcb0","#e0dcd8","#2a2408","#4a4818","#7a7830","#a89030","#d0a838","#f0c830","#f8d450","#f4dc70","#f8e890","#fcf0b0","#fcf8e0","#2a2808","#4c4818","#706c28","#a09030","#c8ac48","#ccbc70","#dccf90","#ece4b0","#f4f0e0","#282020","#4c4830","#6c6858","#908c70","#acaa98","#ccc8c0","#e8e4dc","#28240c","#4c4818","#747030","#90a830","#b0cc40","#d0f040","#d8ff40"];
  function fillRow(id, colours) {
    const row = document.getElementById(id);
    colours.forEach(c => {
      const d = document.createElement("div");
      d.className = "flex-1 h-full border-r border-b border-[#555]/50";
      d.style.background = c;
      row.appendChild(d);
    });
  }
  fillRow("row1", upperRow);
  fillRow("row2", lowerRow);
</script>
</body>
</html>
